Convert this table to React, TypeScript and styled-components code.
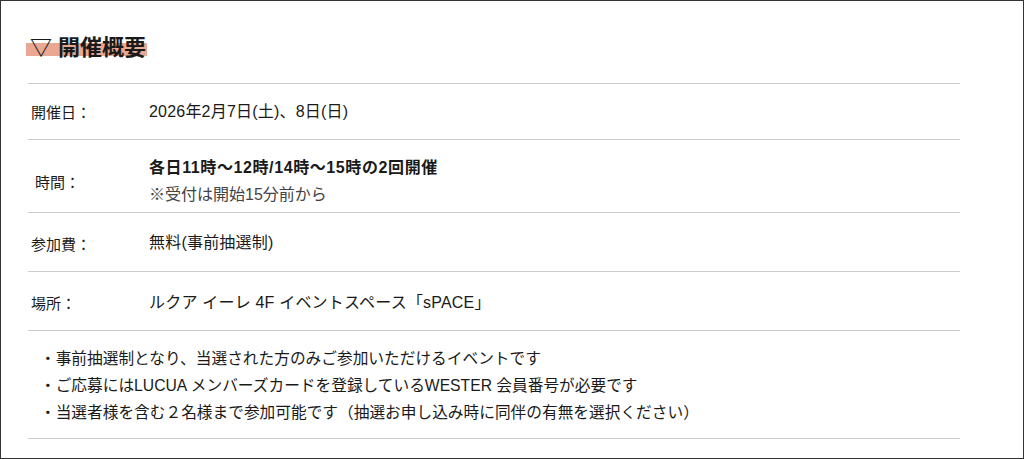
import * as React from "react"
import styled, { createGlobalStyle } from "styled-components"

const GlobalStyle = createGlobalStyle`
  html, body {
    margin: 0;
    padding: 0;
    background: #ffffff;
  }
  body {
    font-family: "Liberation Sans", "Noto Sans CJK JP", sans-serif;
    color: #1a1a1a;
  }
`

const rows = [
  { label: "開催日：", value: "2026年2月7日(土)、8日(日)", height: 56 },
  {
    label: "時間：",
    value: "各日11時〜12時/14時〜15時の2回開催",
    note: "※受付は開始15分前から",
    bold: true,
    height: 73,
    shift: 10,
    indent: 7,
  },
  { label: "参加費：", value: "無料(事前抽選制)", height: 59, shift: 2 },
  { label: "場所：", value: "ルクア イーレ 4F イベントスペース「sPACE」", height: 59, shift: 3 },
]

const notes = [
  "事前抽選制となり、当選された方のみご参加いただけるイベントです",
  "ご応募にはLUCUA メンバーズカードを登録しているWESTER 会員番号が必要です",
  "当選者様を含む２名様まで参加可能です（抽選お申し込み時に同伴の有無を選択ください）",
]

const App = () => {
  return (
    <>
      <GlobalStyle />
      <Frame>
        <Heading>
          <Marker>▽ 開催概要</Marker>
        </Heading>
        <Table>
          {rows.map((r) => (
            <Row key={r.label} $height={r.height} $shift={r.shift ?? 0}>
              <Label $indent={r.indent ?? 3}>{r.label}</Label>
              <Value>
                <Main $bold={r.bold}>{r.value}</Main>
                {r.note && <Sub>{r.note}</Sub>}
              </Value>
            </Row>
          ))}
          <Notes>
            {notes.map((n) => (
              <Note key={n}>・{n}</Note>
            ))}
          </Notes>
        </Table>
      </Frame>
    </>
  )
}
export default App

const Frame = styled.div`
  box-sizing: border-box;
  width: 1024px;
  height: 459px;
  border: 1px solid #333;
  padding: 32px 0 0 27px;
`

const Heading = styled.h2`
  margin: 0 0 20px -2px;
  font-size: 22px;
  font-weight: bold;
  line-height: 30px;
  height: 30px;
`

const Marker = styled.span`
  padding: 0 1px 0 4px;
  background: linear-gradient(transparent 30%, #eaa893 30%, #eaa893 83%, transparent 83%);
`

const Table = styled.div`
  width: 932px;
  border-top: 1px solid #cccccc;
`

const Row = styled.div<{ $height: number; $shift: number }>`
  display: flex;
  align-items: center;
  box-sizing: border-box;
  height: ${(p) => p.$height}px;
  padding-top: ${(p) => p.$shift}px;
  border-bottom: 1px solid #cccccc;
`

const Label = styled.div<{ $indent: number }>`
  width: 121px;
  padding-left: ${(p) => p.$indent}px;
  box-sizing: border-box;
  font-size: 15px;
  color: #1a1a1a;
`

const Value = styled.div`
  display: flex;
  flex-direction: column;
  gap: 5px;
`

const Main = styled.div<{ $bold?: boolean }>`
  font-size: 16px;
  line-height: 22px;
  font-weight: ${(p) => (p.$bold ? "bold" : "normal")};
  letter-spacing: ${(p) => (p.$bold ? "0.6px" : "0.2px")};
  color: #1a1a1a;
`

const Sub = styled.div`
  font-size: 16px;
  line-height: 22px;
  color: #444;
`

const Notes = styled.div`
  display: flex;
  flex-direction: column;
  gap: 5px;
  box-sizing: border-box;
  height: 108px;
  padding: 17px 0 0 12px;
  border-bottom: 1px solid #cccccc;
`

const Note = styled.div`
  font-size: 15.7px;
  line-height: 22px;
  color: #1a1a1a;
`
